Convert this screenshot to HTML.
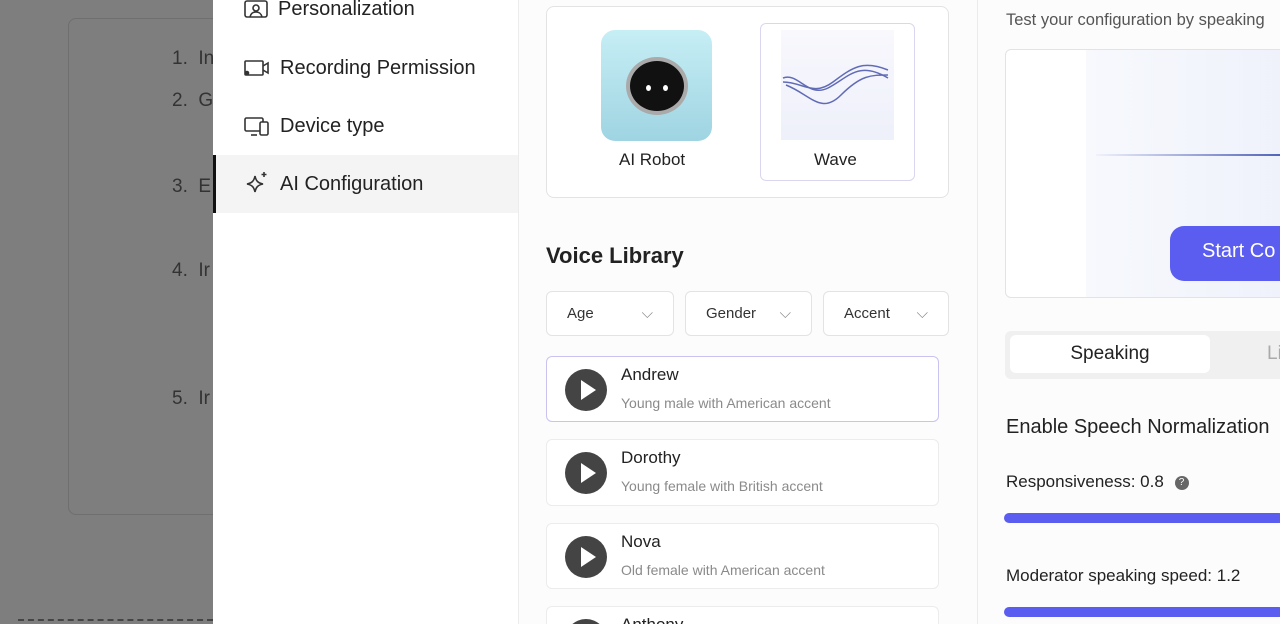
<!DOCTYPE html>
<html style="overflow:hidden;height:624px"><head><meta charset="utf-8"><style>
*{box-sizing:border-box;margin:0;padding:0}
html,body{width:1280px;height:624px;overflow:hidden}
body{position:relative;font-family:"Liberation Sans",sans-serif;background:#fff;color:#222}
.abs{position:absolute}
.ov{left:0;top:0;width:213px;height:624px;background:#7e7e7e;overflow:hidden}
.card0{left:68px;top:18px;width:180px;height:497px;border:1px solid #6f6f6f;border-radius:8px}
.ov .n{position:absolute;left:172px;font-size:19px;color:#333;white-space:nowrap}
.side{left:213px;top:0;width:306px;height:624px;background:#fff;border-right:1px solid #ececec}
.item{position:absolute;left:0;width:305px;height:58px;display:flex;align-items:center;padding-left:31px;font-size:20px;color:#222;white-space:nowrap}
.item svg{margin-right:10px}
.mid{left:519px;top:0;width:459px;height:624px;background:#fcfcfc;border-right:1px solid #ebebeb}
.box{border:1px solid #e3e3e3;border-radius:8px;background:#fff}
.sel{position:absolute;top:291px;height:45px;border:1px solid #e3e3e3;border-radius:6px;background:#fff;font-size:15px;color:#333;display:flex;align-items:center;justify-content:space-between;padding:0 20px}
.v{position:absolute;left:546px;width:393px;height:67px;border:1px solid #ececec;border-radius:6px;background:#fff}
.v .p{position:absolute;left:18px;top:12px;width:42px;height:42px;border-radius:50%;background:#444}
.v .p:after{content:"";position:absolute;left:16px;top:11px;border-left:15px solid #fff;border-top:10px solid transparent;border-bottom:10px solid transparent}
.v .t{position:absolute;left:74px;top:8px;font-size:17px;color:#222}
.v .s{position:absolute;left:74px;top:38px;font-size:14px;color:#8a8a8a}
.right{left:978px;top:0;width:302px;height:624px;background:#fcfcfc;overflow:hidden}
</style></head><body>
<div class="abs ov">
 <div class="abs card0"></div>
 <div class="n" style="top:48px">1.&nbsp; In</div>
 <div class="n" style="top:90px">2.&nbsp; G</div>
 <div class="n" style="top:176px">3.&nbsp; E</div>
 <div class="n" style="top:260px">4.&nbsp; Ir</div>
 <div class="n" style="top:388px">5.&nbsp; Ir</div>
 <div class="abs" style="left:18px;top:619px;width:195px;border-top:2px dashed #444"></div>
</div>
<div class="abs side">
 <div class="item" style="top:-20px"><svg width="24" height="20" viewBox="0 0 24 20" fill="none" stroke="#333" stroke-width="1.6"><rect x="1" y="2" width="22" height="16" rx="2"/><circle cx="12" cy="9" r="3"/><path d="M6 18c1-4 3-5 6-5s5 1 6 5"/></svg>Personalization</div>
 <div class="item" style="top:39px"><svg width="26" height="18" viewBox="0 0 26 18" fill="none" stroke="#333" stroke-width="1.6"><rect x="1" y="2" width="18" height="14" rx="1"/><path d="M19 7l5-3v10l-5-3"/><circle cx="3" cy="14" r="1.5" fill="#333"/></svg>Recording Permission</div>
 <div class="item" style="top:97px"><svg width="26" height="20" viewBox="0 0 26 20" fill="none" stroke="#333" stroke-width="1.6"><rect x="1" y="2" width="18" height="13" rx="1.5"/><path d="M7 19h6"/><rect x="16" y="6" width="8" height="13" rx="1.5" fill="#fff"/></svg>Device type</div>
 <div class="item" style="top:155px;background:#f4f4f5;border-left:3px solid #111;padding-left:28px"><svg width="26" height="26" viewBox="0 0 26 26" fill="none" stroke="#333" stroke-width="1.6"><path d="M11 5c1 5 3 7 8 8-5 1-7 3-8 8-1-5-3-7-8-8 5-1 7-3 8-8z"/><path d="M20 1v5M17.5 3.5h5"/></svg>AI Configuration</div>
</div>
<div class="abs mid">
 <div class="abs box" style="left:27px;top:6px;width:403px;height:192px"></div>
 <div class="abs" style="left:82px;top:30px;width:111px;height:111px;border-radius:14px;background:linear-gradient(#c6eef5,#9fd4e2)">
  <div class="abs" style="left:25px;top:27px;width:62px;height:58px;border-radius:50%;background:#111;border:4px solid #aaa"></div>
  <div class="abs" style="left:45px;top:55px;width:5px;height:6px;background:#fff;border-radius:50%"></div>
  <div class="abs" style="left:62px;top:55px;width:5px;height:6px;background:#fff;border-radius:50%"></div>
 </div>
 <div class="abs" style="left:100px;top:150px;font-size:17px">AI Robot</div>
 <div class="abs" style="left:241px;top:23px;width:155px;height:158px;border:1px solid #d9d6f0;border-radius:6px;background:#fff"></div>
 <div class="abs" style="left:262px;top:30px;width:113px;height:110px;background:linear-gradient(#f8f8fd,#eef0fa)">
  <svg width="113" height="110" viewBox="0 0 113 110" fill="none" stroke="#3c4aa6" stroke-width="1.5" opacity=".8"><path d="M2 48c15-6 25 20 45 10s30-28 60-10"/><path d="M2 52c20 0 30 15 50 0s30-22 55-12"/><path d="M5 55c25 10 35 30 55 10s30-20 47-20"/></svg>
 </div>
 <div class="abs" style="left:295px;top:150px;font-size:17px">Wave</div>
 <div class="abs" style="left:27px;top:243px;font-size:22px;font-weight:bold;color:#222">Voice Library</div>
</div>
<div class="sel" style="left:546px;width:128px">Age<span style="color:#888">⌵</span></div>
<div class="sel" style="left:685px;width:127px">Gender<span style="color:#888">⌵</span></div>
<div class="sel" style="left:823px;width:126px">Accent<span style="color:#888">⌵</span></div>
<div class="v" style="top:356px;border-color:#c9c3f0;height:66px"><div class="p"></div><div class="t">Andrew</div><div class="s">Young male with American accent</div></div>
<div class="v" style="top:439px"><div class="p"></div><div class="t">Dorothy</div><div class="s">Young female with British accent</div></div>
<div class="v" style="top:523px;height:66px"><div class="p"></div><div class="t">Nova</div><div class="s">Old female with American accent</div></div>
<div class="v" style="top:606px;height:18px;border-bottom:none;border-radius:6px 6px 0 0;overflow:hidden"><div class="p"></div><div class="t">Anthony</div></div>
<div class="abs right">
 <div class="abs" style="left:28px;top:11px;font-size:16.5px;color:#555;white-space:nowrap">Test your configuration by speaking</div>
 <div class="abs" style="left:27px;top:49px;width:290px;height:249px;border:1px solid #e3e3e3;border-radius:6px;background:#fff">
  <div class="abs" style="left:80px;top:0;width:220px;height:247px;background:linear-gradient(90deg,#f7f9fd,#eef1fb)"></div>
  <div class="abs" style="left:90px;top:104px;width:210px;height:2px;background:linear-gradient(90deg,#f0f2fb,#3d4fb0)"></div>
  <div class="abs" style="left:164px;top:176px;width:140px;height:55px;border-radius:14px;background:#5b5cf0;color:#fff;font-size:20px;padding:14px 0 0 32px">Start Co</div>
 </div>
 <div class="abs" style="left:27px;top:331px;width:290px;height:48px;border-radius:6px;background:#f0f0f0">
  <div class="abs" style="left:5px;top:4px;width:200px;height:38px;border-radius:6px;background:#fff;text-align:center;font-size:19px;line-height:38px;color:#222">Speaking</div>
  <div class="abs" style="left:262px;top:12px;font-size:19px;color:#aaa">Li</div>
 </div>
 <div class="abs" style="left:28px;top:416px;font-size:20px;color:#222;white-space:nowrap">Enable Speech Normalization</div>
 <div class="abs" style="left:28px;top:472px;font-size:17px;color:#222">Responsiveness: 0.8 <span style="display:inline-block;width:14px;height:14px;border-radius:50%;background:#666;color:#fff;font-size:10px;text-align:center;line-height:14px;vertical-align:middle;margin-left:6px">?</span></div>
 <div class="abs" style="left:26px;top:513px;width:280px;height:10px;border-radius:5px;background:#5b5cf0"></div>
 <div class="abs" style="left:28px;top:566px;font-size:17px;color:#222;white-space:nowrap">Moderator speaking speed: 1.2</div>
 <div class="abs" style="left:26px;top:607px;width:280px;height:10px;border-radius:5px;background:#5b5cf0"></div>
</div>
</body></html>
